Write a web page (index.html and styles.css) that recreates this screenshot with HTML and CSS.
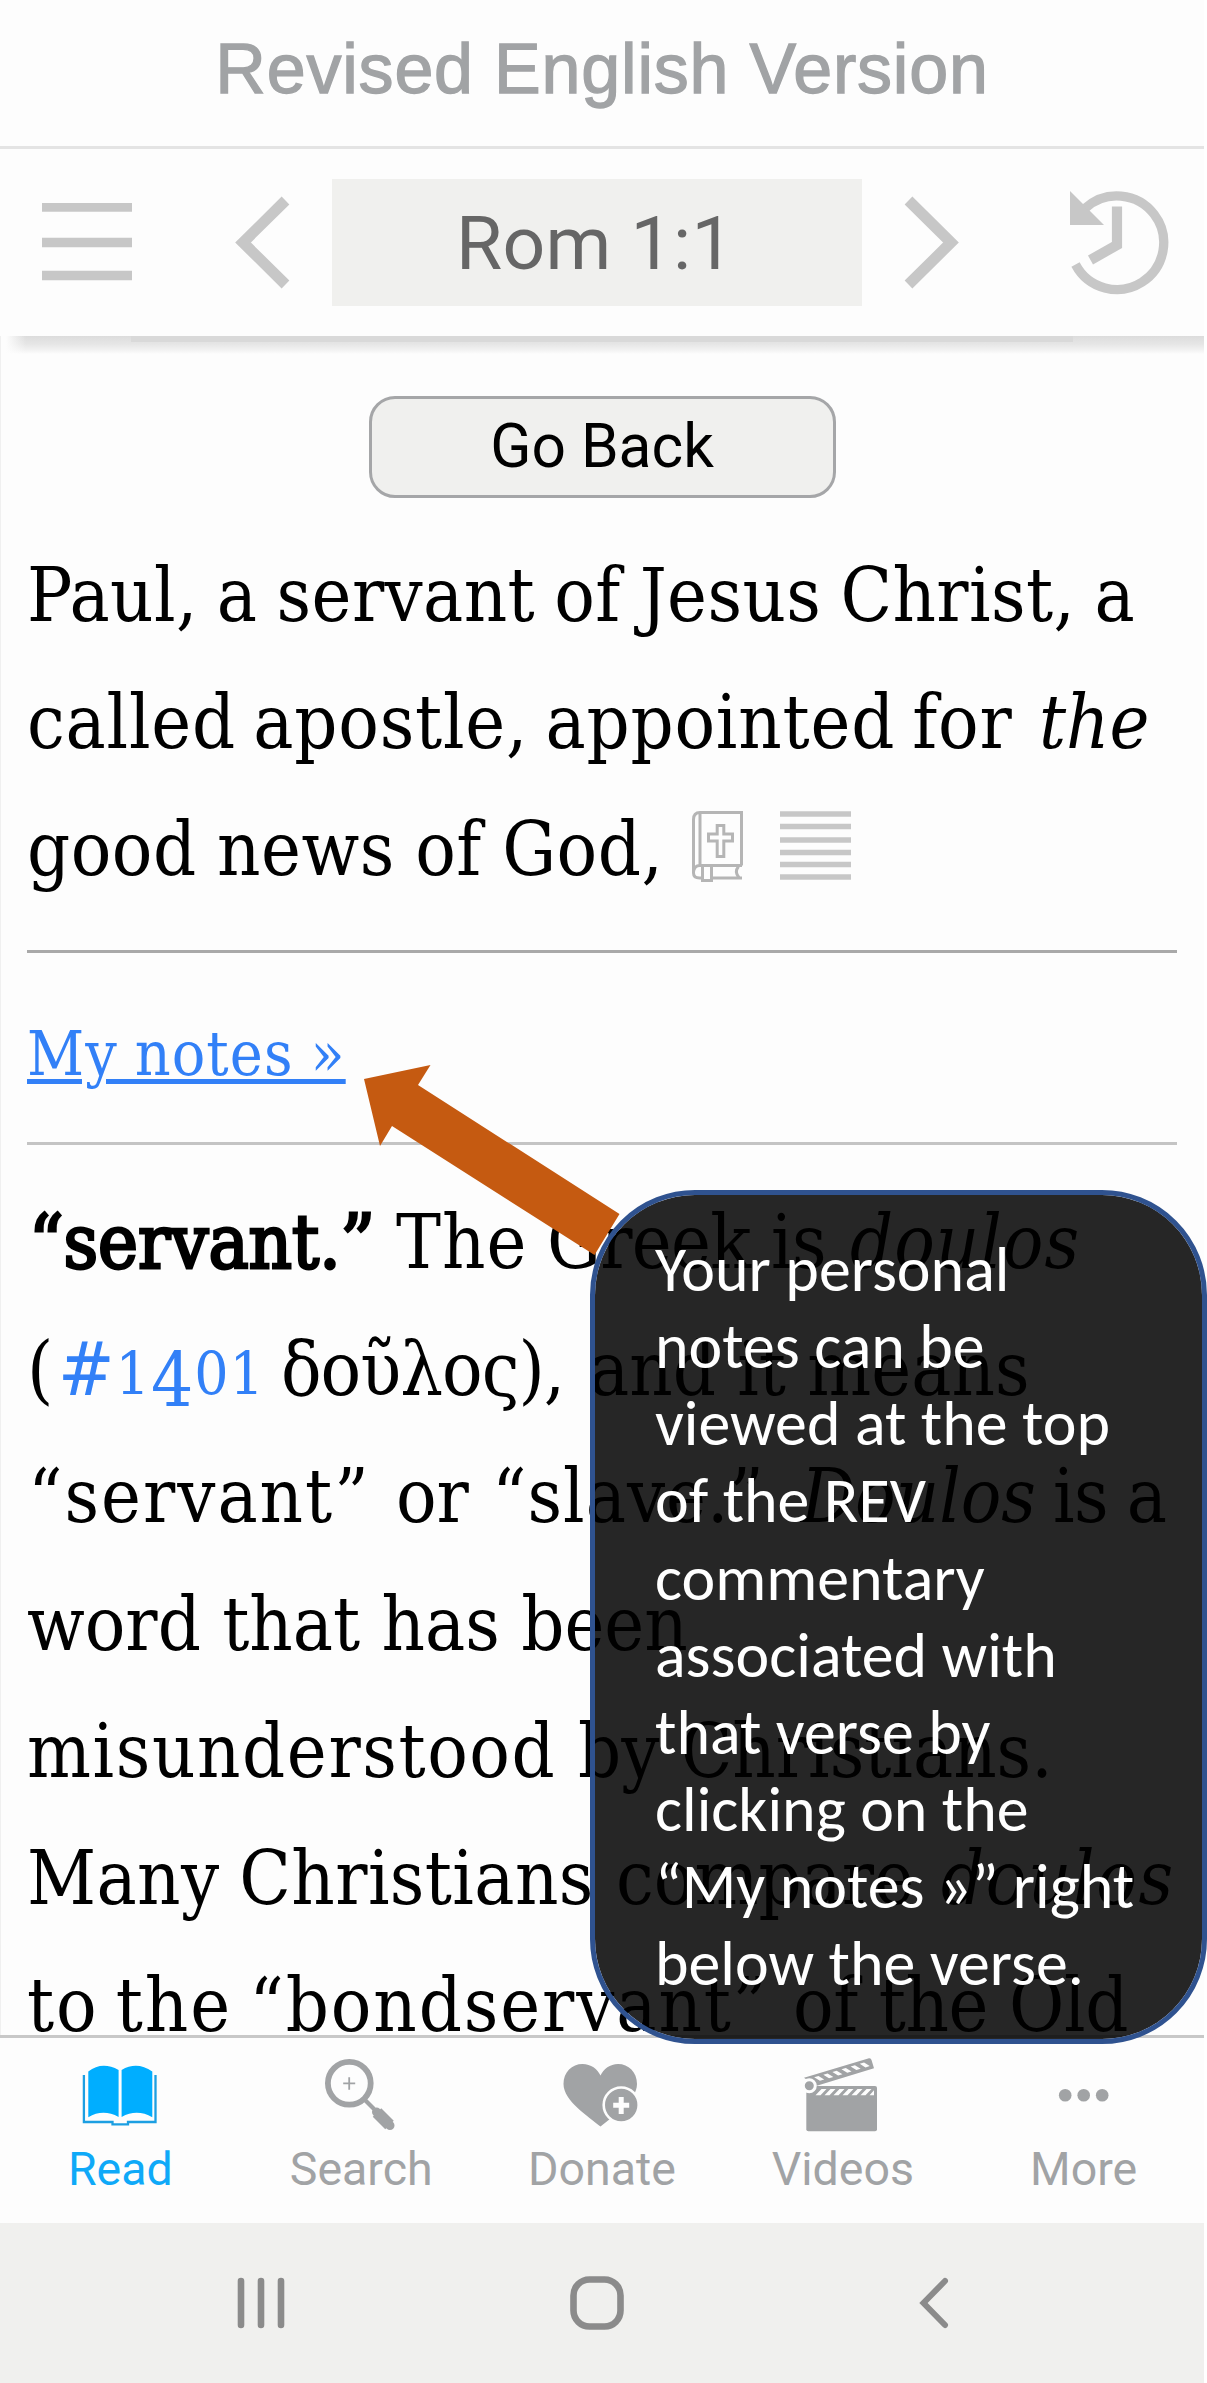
FILE: index.html
```html
<!DOCTYPE html>
<html lang="en">
<head>
<meta charset="utf-8">
<title>Revised English Version</title>
<link rel="stylesheet" href="styles.css">
</head>
<body>
<div class="screen">
  <header class="title">Revised English Version</header>

  <div class="toolbar">
    <svg class="menu" width="90" height="80" viewBox="0 0 90 80"><path d="M0 4h90M0 39.500h90M0 72.500h90" stroke="#c7c7c7" stroke-width="9.400"/></svg>
    <svg class="prev" width="56" height="96" viewBox="0 0 56 96"><path d="M50.500 5.500L8 47.500L50.500 89.500" fill="none" stroke="#c7c7c7" stroke-width="11"/></svg>
    <div class="ref">Rom 1:1</div>
    <svg class="next" width="56" height="96" viewBox="0 0 56 96"><path d="M4.500 5.500L47 47.500L4.500 89.500" fill="none" stroke="#c7c7c7" stroke-width="11"/></svg>
    <svg class="history" width="100" height="104" viewBox="0 0 100 104">
      <path d="M0 0V34H34z" fill="#c7c7c7"/>
      <path d="M15.500 17A46.800 46.800 0 1 1 5.500 73.500" fill="none" stroke="#c7c7c7" stroke-width="9.300"/>
      <path d="M47 15.500V54L20.500 69" fill="none" stroke="#c7c7c7" stroke-width="10.200"/>
    </svg>
  </div>

  <main class="content">
    <div class="shade"></div>
    <button class="back" type="button">Go Back</button>
    <div class="verse">
      <div class="line"><span class="v1">Paul, a servant of Jesus Christ, a</span></div>
      <div class="line"><span class="v2">called apostle, appointed for</span><i>the</i></div>
      <div class="line"><span class="v3">good news of God,</span>
        <svg class="bible" width="54" height="74" viewBox="0 0 54 74" fill="none" stroke="#b5b5b5" stroke-width="3">
          <path d="M51.500 56.500V3.500H10Q3.500 3.500 3.500 10.500V64Q3.500 69 9.500 69H11.500M22 69H52M10 3.500V56.500M3.500 63Q4 56.500 10 56.500H52M48.500 57.500Q44 63 49 68.500M12.500 57V71.500H21.500V57"/>
          <path d="M27.200 16.500h6.600v8.500h8.700v7h-8.700v15.500h-6.600V32h-8.700v-7h8.700z"/>
        </svg>
        <svg class="lines" width="71" height="70" viewBox="0 0 71 70"><path d="M0 3h71M0 15.500h71M0 29h71M0 41.500h71M0 53.500h71M0 66h71" stroke="#c7c7c7" stroke-width="5.300"/></svg>
      </div>
    </div>
    <hr class="rule">
    <div class="notes"><a href="#">My notes »</a></div>
    <hr class="rule pale">
    <div class="commentary">
      <div class="line"><b class="c1a">“servant.”</b><span class="c1b">The</span><span class="c1c">Greek is</span><i class="c1d">doulos</i></div>
      <div class="line"><span class="c2a">(</span><span class="strong-no">#<small>1</small><sub>4</sub><small>01</small></span><span class="c2c">δοῦλος),</span><span>and it means</span></div>
      <div class="line"><span class="c3a">“servant”</span><span class="c3b">or</span><span class="c3c">“slave.”</span><i class="c3d">Doulos</i><span class="c3e">is a</span></div>
      <div class="line"><span>word that has been</span></div>
      <div class="line"><span class="c5a">misunderstood</span><span>by Christians.</span></div>
      <div class="line"><span class="c6a">Many Christians</span><span class="c6b">compare</span><i class="c6c">doulos</i></div>
      <div class="line"><span class="c7a">to the “bondservant”</span><span class="c7b">of the Old</span></div>
    </div>
  </main>

  <nav class="tabs">
    <a class="tab active">
      <svg width="90" height="80" viewBox="0 0 90 80">
        <path d="M13.300 16.500Q27 6 43.600 15V62Q28 53.500 13.300 62.300zM46.600 15Q62 6 77.300 16.500V62.300Q62 53.500 46.600 62z" fill="#00aeff"/>
        <path d="M8.900 20V67H37.500V69.300H53V67H80.500V20" fill="none" stroke="#1c9fe2" stroke-width="2.300"/>
      </svg>
      <span>Read</span>
    </a>
    <a class="tab">
      <svg width="90" height="80" viewBox="0 0 90 80" fill="none" stroke="#a1a3a5">
        <circle cx="33.300" cy="28.300" r="21.400" stroke-width="5.800"/>
        <path d="M27.200 28.300h12M33.200 22.300v12.500" stroke-width="1.800"/>
        <path d="M48.500 44.500L58 54" stroke-width="4.200"/>
        <path d="M61 57.500L73.500 70" stroke-width="12" />
        <path d="M60.500 57L74 70.500" stroke-width="9" stroke-linecap="round"/>
      </svg>
      <span>Search</span>
    </a>
    <a class="tab">
      <svg width="90" height="80" viewBox="0 0 90 80">
        <path d="M43.500 71.500C32 62 6.500 46 6.500 29C6.500 17 15 9 25.500 9C34 9 40.500 14 43.500 20.500C46.500 14 53 9 61 9C71.500 9 80 17 80 29C80 46 55 62 43.500 71.500z" fill="#a1a3a5"/>
        <circle cx="64.200" cy="50" r="17.500" fill="#a1a3a5" stroke="#fdfdfd" stroke-width="2.600"/>
        <path d="M56.200 50.300h16M64.200 42v17" stroke="#fdfdfd" stroke-width="5"/>
      </svg>
      <span>Donate</span>
    </a>
    <a class="tab">
      <svg width="90" height="80" viewBox="0 0 90 80">
        <rect x="8.300" y="31" width="70.700" height="45.300" rx="2" fill="#a1a3a5"/>
        <path d="M17.500 40.300l6-6.300h5l-6 6.300zM26.500 40.300l6-6.300h5l-6 6.300zM35.500 40.300l6-6.300h5l-6 6.300zM44.500 40.300l6-6.300h5l-6 6.300zM53.500 40.300l6-6.300h5l-6 6.300zM62.500 40.300l6-6.300h5l-6 6.300zM71.500 40.300l4.500-5v5z" fill="#fdfdfd"/>
        <path d="M6 22.700L71 3.300Q73 3 73.500 5L76 13.300L18 31z" fill="#a1a3a5"/>
        <g transform="translate(15.500 23.600) rotate(-16.500)" fill="#fdfdfd"><path d="M1 -1h4.500l4.500 5h-4.500zM10.500 -1h4.500l4.500 5h-4.500zM20 -1h4.500l4.500 5h-4.500zM29.500 -1h4.500l4.500 5h-4.500zM39 -1h4.500l4.500 5h-4.500zM48.500 -1h4.500l4.500 5h-4.500z"/></g>
        <circle cx="11.300" cy="30.700" r="6" fill="#a1a3a5" stroke="#fdfdfd" stroke-width="3"/>
      </svg>
      <span>Videos</span>
    </a>
    <a class="tab">
      <svg width="90" height="80" viewBox="0 0 90 80" fill="#a1a3a5"><circle cx="26.200" cy="40.300" r="6.300"/><circle cx="44.700" cy="40.300" r="6.300"/><circle cx="63.200" cy="40.300" r="6.300"/></svg>
      <span>More</span>
    </a>
  </nav>

  <footer class="system">
    <svg class="recents" width="48" height="54" viewBox="0 0 48 54"><path d="M4 5v44M24 5v44M44 5v44" stroke="#8b8b8b" stroke-width="6.600" stroke-linecap="round"/></svg>
    <svg class="home" width="55" height="54" viewBox="0 0 55 54"><rect x="3.500" y="3.500" width="47" height="47" rx="16" fill="none" stroke="#8b8b8b" stroke-width="6.600"/></svg>
    <svg class="return" width="30" height="54" viewBox="0 0 30 54"><path d="M26 5L4.500 27L26 49" fill="none" stroke="#8b8b8b" stroke-width="6" stroke-linecap="round"/></svg>
  </footer>

  <svg class="arrow" width="257" height="192" viewBox="0 0 257 192"><path d="M1 15L67.500 1L55 21L256.500 150L231.500 191L29 62L17 82z" fill="#c55a11"/></svg>
  <aside class="callout">Your personal<br>notes can be<br>viewed at the top<br>of the REV<br>commentary<br>associated with<br>that verse by<br>clicking on the<br>“My notes »” right<br>below the verse.</aside>
</div>
</body>
</html>
```
FILE: styles.css
```css
* { box-sizing: border-box; }
body { margin: 0; background: #fff; }
svg { display: block; flex: none; }

.screen {
  position: relative;
  display: flex;
  flex-direction: column;
  width: 1204px;
  height: 2383px;
  background: #fdfdfd;
  color: #000;
}

.title {
  display: flex;
  flex: none;
  align-items: center;
  justify-content: center;
  height: 149px;
  padding-bottom: 9px;
  border-bottom: 3px solid #e4e4e4;
  color: #a1a3a5;
  font: 70px "Liberation Sans", Arial, sans-serif;
  letter-spacing: 0.8px;
  -webkit-text-stroke: 1.3px #a1a3a5;
}

.toolbar {
  display: flex;
  flex: none;
  align-items: center;
  height: 187px;
  padding-left: 42px;
}
.prev { margin-left: 103px; }
.ref {
  display: flex;
  align-items: center;
  justify-content: center;
  width: 530px;
  height: 127px;
  margin-left: 41px;
  padding-right: 4px;
  background: #f0f0ee;
  color: #666;
  font: 75px Roboto, sans-serif;
  letter-spacing: 0.3px;
}
.next { margin-left: 42px; }
.history { margin-left: 110px; }

.content {
  display: flex;
  flex: none;
  flex-direction: column;
  height: 1699px;
  padding: 0 27px 0 26px;
  overflow: hidden;
  border-left: 1px solid #f0f0f0;
  font: 75px/127px "DejaVu Serif Condensed", "DejaVu Serif", serif;
}
.shade {
  flex: none;
  height: 18px;
  margin: 0 -27px 0 -27px;
  background:
    linear-gradient(#d9d9d9, #d9d9d9) 131px 0 / 942px 6px no-repeat,
    linear-gradient(90deg, #fdfdfd 6px, rgba(253, 253, 253, 0) 26px),
    linear-gradient(#dcdcdc, #e6e6e6 45%, #f3f3f3 80%, #fdfdfd);
}
.back {
  flex: none;
  align-self: center;
  width: 467px;
  height: 102px;
  margin-top: 42px;
  padding: 0 0 2px;
  border: 3px solid #a5a6a8;
  border-radius: 26px;
  background: #f0f0ee;
  color: #000;
  font: 60.500px Roboto, sans-serif;
}

.line { display: flex; height: 127px; white-space: pre; }
.line > * { flex: none; }
.verse { flex: none; margin-top: 34px; }
.v1 { letter-spacing: 0.4px; word-spacing: -2.7px; }
.v2 { width: 1012px; letter-spacing: 0.8px; word-spacing: -5px; }
.v3 { width: 663px; letter-spacing: 0.5px; word-spacing: -1.5px; }
.bible { margin-top: 23px; }
.lines { margin: 25px 0 0 36px; }

.rule { flex: none; width: 1150px; height: 3px; margin: 37px 0 0; border: 0; background: #a9a9a9; }
.rule.pale { margin-top: 0; background: #c4c4c4; }
.notes { flex: none; height: 189px; padding-top: 6px; line-height: 190px; font-size: 62px; }
.notes a {
  color: #3280f7;
  letter-spacing: 1.1px;
  word-spacing: -2px;
  text-decoration: underline;
  text-decoration-thickness: 5px;
  text-underline-offset: 4px;
}

.commentary { flex: none; margin-top: 34px; }
.commentary .line { height: 127.2px; }
.c1a { width: 369px; padding-left: 2px; font-weight: 400; -webkit-text-stroke: 2.8px #000; }
.c1b { width: 151px; letter-spacing: 1px; }
.c1c { width: 303px; letter-spacing: -0.7px; }
.c1d { letter-spacing: 1px; }
.c2a { width: 31px; }
.strong-no { width: 223px; color: #3280f7; letter-spacing: 1px; }
.strong-no small { font-size: 60px; }
.strong-no sub { font-size: 74px; vertical-align: -11px; line-height: 0; }
.c2c { width: 308px; letter-spacing: -1px; }
.c3a { width: 369px; padding-left: 1px; letter-spacing: 2px; }
.c3b { width: 96px; }
.c3c { width: 309px; letter-spacing: 1px; }
.c3d { width: 252px; }
.c3e { letter-spacing: -0.6px; word-spacing: -2px; }
.c5a { width: 551px; letter-spacing: 1.6px; }
.c6a { width: 589px; letter-spacing: 0.4px; word-spacing: -2px; }
.c6b { width: 325px; }
.c6c { letter-spacing: 1.6px; }
.c7a { width: 766px; letter-spacing: 1.9px; word-spacing: -6px; }
.c7b { letter-spacing: -0.4px; }

.tabs {
  display: grid;
  flex: none;
  grid-template-columns: repeat(5, 1fr);
  height: 188px;
  padding-top: 17px;
  border-top: 3px solid #c8c8c8;
}
.tab {
  display: flex;
  flex-direction: column;
  align-items: center;
  gap: 6px;
  color: #a1a3a5;
  font: 46.500px/56px Roboto, sans-serif;
}
.tab.active { color: #0fa9f8; }

.system { display: flex; flex: none; height: 160px; padding: 53px 0 0 237px; background: #f0f0ee; }
.home { margin-left: 285px; }
.return { margin-left: 294px; }

.arrow { position: absolute; left: 363px; top: 1064px; }
.callout {
  position: absolute;
  left: 590px;
  top: 1190px;
  width: 617px;
  height: 854px;
  padding: 36px 0 0 60px;
  border: 5px solid #2f528f;
  border-radius: 105px;
  background: rgba(0, 0, 0, 0.85);
  background-clip: padding-box;
  color: #fff;
  font: 63.900px/77.150px Carlito, Calibri, Lato, sans-serif;
  white-space: nowrap;
}
```
